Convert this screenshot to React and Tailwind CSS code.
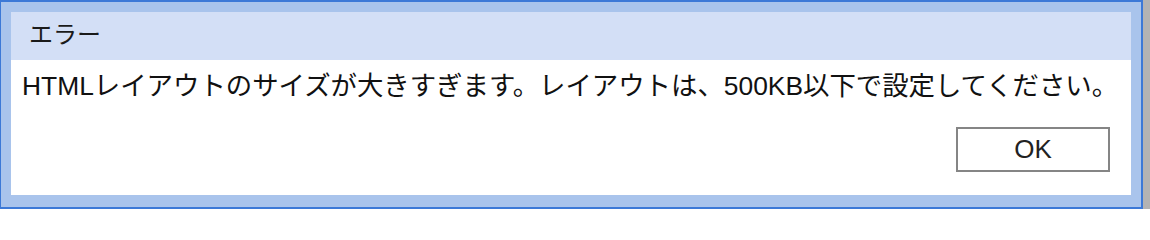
import React from "react";

const font = { fontFamily: '"Liberation Sans", "Noto Sans CJK JP", sans-serif' };

const App = () => {
  return (
    <div className="w-[1150px] h-[209px] bg-[#b3b3b3]" style={font}>
      <div className="w-[1143px] h-[209px] border-t-2 border-l border-r-2 border-b-2 border-[#3c79d7] bg-[#a9c4ec] pt-[10px] pl-[10px] pr-[10px] pb-[12px] flex flex-col">
        <div className="h-[48px] shrink-0 bg-[#d3dff6] pl-[18px] pb-[3px] flex items-center text-[24px] text-[#1a1a1a]">
          エラー
        </div>
        <div className="flex-1 bg-white flex flex-col">
          <p className="pl-[11px] pt-[11px] text-[26.4px] leading-[30px] text-[#111] whitespace-nowrap">
            HTMLレイアウトのサイズが大きすぎます。レイアウトは、500KB以下で設定してください。
          </p>
          <div className="flex justify-end pr-[21px] mt-[26px]">
            <button className="w-[154px] h-[45px] border-2 border-[#858585] bg-white text-[26px] text-[#222] flex items-center justify-center">
              OK
            </button>
          </div>
        </div>
      </div>
    </div>
  );
};

export default App;
